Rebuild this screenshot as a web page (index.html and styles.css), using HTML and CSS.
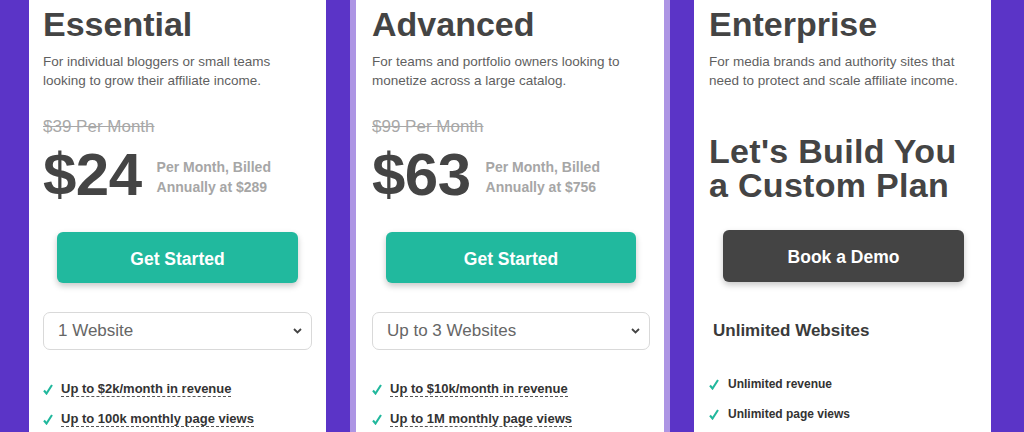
FILE: index.html
```html
<!DOCTYPE html>
<html lang="en">
<head>
<meta charset="utf-8">
<title>Pricing</title>
<link rel="stylesheet" href="styles.css">
</head>
<body>
<main class="plans">
  <section class="card">
    <h2 class="title">Essential</h2>
    <p class="desc">For individual bloggers or small teams looking to grow their affiliate income.</p>
    <p class="old">$39 Per Month</p>
    <div class="price-row">
      <span class="price">$24</span>
      <span class="billing">Per Month, Billed<br>Annually at $289</span>
    </div>
    <a class="btn btn-teal">Get Started</a>
    <div class="select"><span>1 Website</span><svg width="9" height="6" viewBox="0 0 9 6"><path d="M1 1l3.5 3.5L8 1" fill="none" stroke="#444" stroke-width="1.8"/></svg></div>
    <ul class="features">
      <li><svg class="check" width="10" height="11" viewBox="0 0 10 11"><path d="M1 6.5l2.5 3L9 1" fill="none" stroke="#21b89d" stroke-width="2.1"/></svg><span class="dash">Up to $2k/month in revenue</span></li>
      <li><svg class="check" width="10" height="11" viewBox="0 0 10 11"><path d="M1 6.5l2.5 3L9 1" fill="none" stroke="#21b89d" stroke-width="2.1"/></svg><span class="dash">Up to 100k monthly page views</span></li>
    </ul>
  </section>
  <section class="card card-featured">
    <h2 class="title">Advanced</h2>
    <p class="desc">For teams and portfolio owners looking to monetize across a large catalog.</p>
    <p class="old">$99 Per Month</p>
    <div class="price-row">
      <span class="price">$63</span>
      <span class="billing">Per Month, Billed<br>Annually at $756</span>
    </div>
    <a class="btn btn-teal">Get Started</a>
    <div class="select"><span>Up to 3 Websites</span><svg width="9" height="6" viewBox="0 0 9 6"><path d="M1 1l3.5 3.5L8 1" fill="none" stroke="#444" stroke-width="1.8"/></svg></div>
    <ul class="features">
      <li><svg class="check" width="10" height="11" viewBox="0 0 10 11"><path d="M1 6.5l2.5 3L9 1" fill="none" stroke="#21b89d" stroke-width="2.1"/></svg><span class="dash">Up to $10k/month in revenue</span></li>
      <li><svg class="check" width="10" height="11" viewBox="0 0 10 11"><path d="M1 6.5l2.5 3L9 1" fill="none" stroke="#21b89d" stroke-width="2.1"/></svg><span class="dash">Up to 1M monthly page views</span></li>
    </ul>
  </section>
  <section class="card card-ent">
    <h2 class="title">Enterprise</h2>
    <p class="desc">For media brands and authority sites that need to protect and scale affiliate income.</p>
    <h3 class="custom">Let's Build You a Custom Plan</h3>
    <a class="btn btn-dark">Book a Demo</a>
    <p class="sites">Unlimited Websites</p>
    <ul class="features features-ent">
      <li><svg class="check" width="10" height="11" viewBox="0 0 10 11"><path d="M1 6.5l2.5 3L9 1" fill="none" stroke="#21b89d" stroke-width="2.1"/></svg><span>Unlimited revenue</span></li>
      <li><svg class="check" width="10" height="11" viewBox="0 0 10 11"><path d="M1 6.5l2.5 3L9 1" fill="none" stroke="#21b89d" stroke-width="2.1"/></svg><span>Unlimited page views</span></li>
    </ul>
  </section>
</main>
</body>
</html>
```
FILE: styles.css
```css
* { box-sizing: border-box; }
html, body { margin: 0; padding: 0; }
body {
  background: #5b34c7;
  font-family: "Liberation Sans", Arial, sans-serif;
  color: #444;
  height: 432px;
  overflow: hidden;
}
.plans {
  display: grid;
  grid-template-columns: 297px 320px 297px;
  column-gap: 24px;
  padding-left: 29px;
  align-items: stretch;
  height: 432px;
}
.card {
  background: #fff;
  padding: 4px 14px 0 14px;
  height: 432px;
}
.card-featured {
  border-left: 6px solid #ad95e4;
  border-right: 6px solid #ad95e4;
  padding: 4px 14px 0 16px;
}
.card-ent { padding: 4px 13px 0 15px; }
.title {
  margin: 0;
  font-size: 34px;
  line-height: 40px;
  font-weight: 700;
  color: #444;
}
.desc {
  margin: 8px 0 0;
  font-size: 13.5px;
  line-height: 19px;
  color: #5f5f5f;
}
.old {
  margin: 27px 0 0;
  font-size: 17px;
  line-height: 20px;
  color: #a8a8a8;
  text-decoration: line-through;
}
.price-row {
  display: flex;
  align-items: center;
  gap: 15px;
  margin-top: 8px;
  height: 60px;
}
.price {
  font-size: 60px;
  line-height: 60px;
  font-weight: 700;
  color: #444;
  letter-spacing: -0.5px;
}
.billing {
  font-size: 14px;
  line-height: 20px;
  font-weight: 700;
  color: #a6a6a6;
  margin-top: 4px;
}
.btn {
  display: flex;
  align-items: center;
  justify-content: center;
  height: 51px;
  padding-top: 3px;
  margin: 27px 14px 0;
  border-radius: 6px;
  color: #fff;
  font-size: 17.5px;
  font-weight: 700;
  box-shadow: 0 3px 6px rgba(0,0,0,0.22);
}
.btn-teal { background: #21b99e; }
.btn-dark { background: #444; margin-top: 28px; height: 52px; }
.select {
  margin-top: 29px;
  height: 38px;
  border: 1px solid #d9d9d9;
  border-radius: 7px;
  display: flex;
  align-items: center;
  justify-content: space-between;
  padding: 0 9px 0 14px;
  font-size: 17px;
  color: #666;
}
.features {
  list-style: none;
  margin: 24px 0 0;
  padding: 0;
}
.features li {
  display: flex;
  align-items: center;
  height: 30px;
  font-size: 13px;
  font-weight: 700;
  color: #333;
}
.check { margin-right: 8px; flex: none; }
.dash {
  border-bottom: 1px dashed #555;
  line-height: 15px;
}
.custom {
  margin: 44px 0 0;
  font-size: 34px;
  line-height: 34px;
  font-weight: 700;
  color: #444;
  letter-spacing: 0.3px;
}
.sites {
  margin: 39px 0 0 4px;
  font-size: 17px;
  line-height: 20px;
  font-weight: 700;
  color: #3a3a3a;
}
.features-ent { margin-top: 28px; }
.features-ent li { font-size: 12px; }
.features-ent .check { margin-right: 9px; }
```
